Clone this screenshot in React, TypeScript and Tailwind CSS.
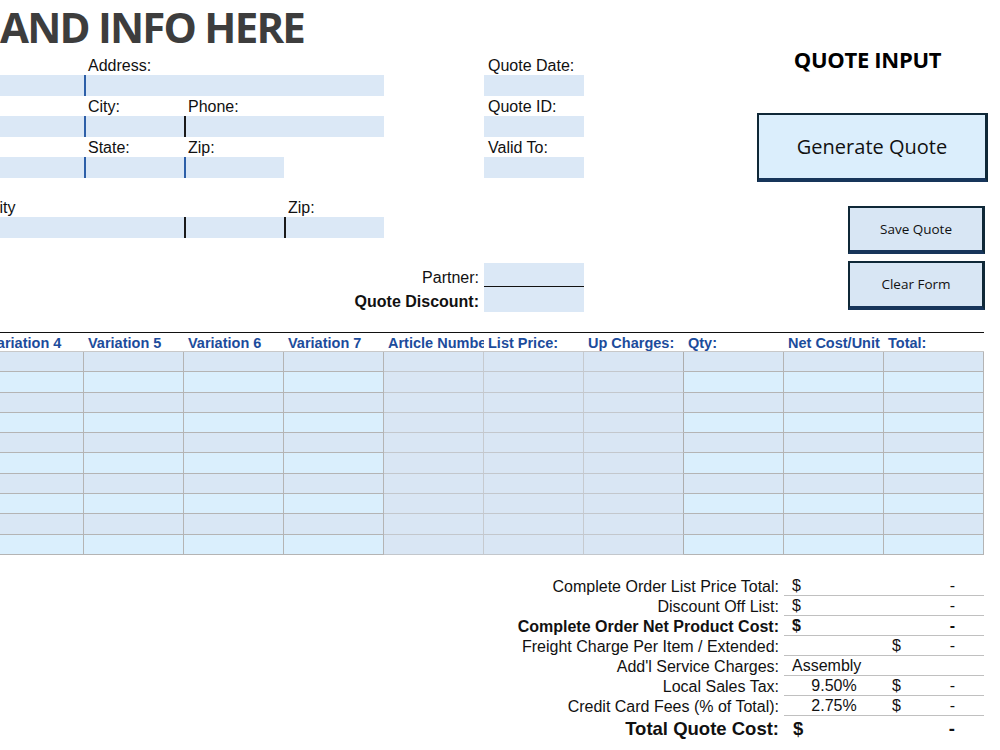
import type { ReactNode } from 'react'

const HEADERS = [
  'Variation 4',
  'Variation 5',
  'Variation 6',
  'Variation 7',
  'Article Number',
  'List Price:',
  'Up Charges:',
  'Qty:',
  'Net Cost/Unit',
  'Total:',
]

/** Cell fill + grid line colours for the line-item table. Article / List / Up Charges don't band. */
function cellClass(col: number, row: number) {
  const plain = col >= 4 && col <= 6
  if (plain) {
    const right = col === 6 ? 'border-r-[#adadad]' : 'border-r-[#c6cacf]'
    return `bg-[#d9e6f4] border-b border-r border-b-[#c3c7cc] ${right}`
  }
  const fill = row % 2 === 0 ? 'bg-[#d9e7f5]' : 'bg-[#daeffd]'
  return `${fill} border-b border-r border-b-[#b4b4b4] border-r-[#b4b4b4]`
}

function LabelRow({ h, children }: { h: string; children: ReactNode }) {
  return <div className={`flex ${h} items-end whitespace-nowrap text-[16px] leading-[18px]`}>{children}</div>
}

function Col({ children, className = '' }: { children?: ReactNode; className?: string }) {
  return <div className={`w-[100px] shrink-0 pl-1 ${className}`}>{children}</div>
}

function SumRow({ label, children, bold }: { label: string; children?: ReactNode; bold?: boolean }) {
  return (
    <div className={`flex h-[20px] items-end text-[16px] leading-[18px] ${bold ? 'font-bold' : ''}`}>
      <div className="w-[800px] shrink-0 pr-[5px] text-right whitespace-nowrap">{label}</div>
      <div className="flex h-full w-[200px] shrink-0 items-end border-b border-[#c0c0c0]">{children}</div>
    </div>
  )
}

function Money({ w = 'w-[200px]' }: { w?: string }) {
  return (
    <div className={`flex ${w} justify-between pl-2 pr-[29px]`}>
      <span>$</span>
      <span>-</span>
    </div>
  )
}

function SheetButton({ label, className }: { label: string; className: string }) {
  return (
    <button
      type="button"
      className={`flex items-center justify-center border-2 border-r-[3px] border-b-4 border-[#0f2837] border-b-[#17355a] font-['Open_Sans',sans-serif] text-[#111] ${className}`}
    >
      {label}
    </button>
  )
}

export default function App() {
  const field = 'bg-[#dbe8f6]'

  return (
    <div className="h-[750px] w-[1000px] overflow-hidden bg-white font-['Liberation_Sans',Arial,sans-serif] text-[#111]">
      <div className="-ml-4 w-[1016px]">
        {/* header block: customer info on the left, actions on the right */}
        <div className="flex h-[332px]">
          <div className="flex w-[600px] shrink-0 flex-col">
            <div className="h-[55px] pl-4 pt-[6px] font-['Open_Sans',sans-serif] text-[42px] leading-[42px] font-bold tracking-[-1.8px] whitespace-nowrap text-[#3d3d3d]">
              AND INFO HERE
            </div>

            <LabelRow h="h-[20px]">
              <Col />
              <Col>Address:</Col>
              <Col />
              <Col />
              <Col />
              <Col>Quote Date:</Col>
            </LabelRow>
            <div className="flex h-[21px]">
              <div className={`w-[100px] ${field}`} />
              <div className={`w-[300px] border-l-2 border-[#2d5fa8] ${field}`} />
              <div className="w-[100px]" />
              <div className={`w-[100px] ${field}`} />
            </div>

            <LabelRow h="h-[20px]">
              <Col />
              <Col>City:</Col>
              <Col>Phone:</Col>
              <Col />
              <Col />
              <Col>Quote ID:</Col>
            </LabelRow>
            <div className="flex h-[21px]">
              <div className={`w-[100px] ${field}`} />
              <div className={`w-[100px] border-l-2 border-[#2d5fa8] ${field}`} />
              <div className={`w-[200px] border-l-2 border-[#1a1a1a] ${field}`} />
              <div className="w-[100px]" />
              <div className={`w-[100px] ${field}`} />
            </div>

            <LabelRow h="h-[20px]">
              <Col />
              <Col>State:</Col>
              <Col>Zip:</Col>
              <Col />
              <Col />
              <Col>Valid To:</Col>
            </LabelRow>
            <div className="flex h-[21px]">
              <div className={`w-[100px] ${field}`} />
              <div className={`w-[100px] border-l-2 border-[#2d5fa8] ${field}`} />
              <div className={`w-[100px] border-l-2 border-[#2d5fa8] ${field}`} />
              <div className="w-[200px]" />
              <div className={`w-[100px] ${field}`} />
            </div>

            <div className="h-[20px]" />

            <LabelRow h="h-[19px]">
              <Col>City</Col>
              <Col />
              <Col />
              <Col>Zip:</Col>
            </LabelRow>
            <div className="flex h-[21px]">
              <div className={`w-[200px] ${field}`} />
              <div className={`w-[100px] border-l-2 border-[#1a1a1a] ${field}`} />
              <div className={`w-[100px] border-l-2 border-[#1a1a1a] ${field}`} />
            </div>

            <div className="h-[25px]" />

            <div className="flex h-[24px] items-end text-[16px] leading-[18px]">
              <div className="w-[500px] pr-[5px] text-right">Partner:</div>
              <div className={`h-full w-[100px] border-b border-[#111] ${field}`} />
            </div>
            <div className="flex h-[25px] items-end text-[16px] leading-[18px] font-bold">
              <div className="w-[500px] pr-[5px] pb-[1px] text-right">Quote Discount:</div>
              <div className={`h-full w-[100px] ${field}`} />
            </div>
          </div>

          <div className="flex w-[416px] shrink-0 flex-col">
            <div className="ml-[173px] mt-[44px] h-[30px] w-[221px] text-center font-['Open_Sans',sans-serif] text-[22px] leading-[30px] font-bold tracking-[-0.3px] text-black">
              QUOTE INPUT
            </div>
            <SheetButton label="Generate Quote" className="ml-[173px] mt-[39px] h-[69px] w-[231px] bg-[#dbeefc] text-[20px]" />
            <SheetButton label="Save Quote" className="ml-[264px] mt-[24px] h-[48px] w-[137px] bg-[#d8e6f4] text-[13.5px]" />
            <SheetButton label="Clear Form" className="ml-[264px] mt-[7px] h-[49px] w-[137px] bg-[#d8e6f4] text-[13.5px]" />
          </div>
        </div>

        {/* line items */}
        <div className="w-[1000px]">
          <div className="flex h-[20px] border-t border-[#111] border-b border-b-[#c8c8c8] bg-white">
            {HEADERS.map((h) => (
              <div
                key={h}
                className="flex w-[100px] shrink-0 items-end overflow-hidden whitespace-nowrap pl-1 text-[14.5px] leading-[16px] font-bold text-[#1c4c9c]"
              >
                {h}
              </div>
            ))}
          </div>
          {Array.from({ length: 10 }).map((_, r) => (
            <div key={r} className="flex h-[20.3px]">
              {HEADERS.map((h, c) => (
                <div key={h} className={`w-[100px] shrink-0 ${cellClass(c, r)}`} />
              ))}
            </div>
          ))}
        </div>

        {/* totals */}
        <div className="mt-[21px]">
          <SumRow label="Complete Order List Price Total:">
            <Money />
          </SumRow>
          <SumRow label="Discount Off List:">
            <Money />
          </SumRow>
          <SumRow label="Complete Order Net Product Cost:" bold>
            <Money />
          </SumRow>
          <SumRow label="Freight Charge Per Item / Extended:">
            <div className="w-[100px]" />
            <Money w="w-[100px]" />
          </SumRow>
          <SumRow label="Add'l Service Charges:">
            <div className="w-[200px] pl-2">Assembly</div>
          </SumRow>
          <SumRow label="Local Sales Tax:">
            <div className="w-[100px] text-center">9.50%</div>
            <Money w="w-[100px]" />
          </SumRow>
          <SumRow label="Credit Card Fees (% of Total):">
            <div className="w-[100px] text-center">2.75%</div>
            <Money w="w-[100px]" />
          </SumRow>
          <div className="flex h-[24px] items-end text-[18.5px] leading-[22px] font-bold">
            <div className="w-[800px] shrink-0 pr-[5px] text-right">Total Quote Cost:</div>
            <div className="flex w-[200px] justify-between pl-[9px] pr-[29px]">
              <span>$</span>
              <span>-</span>
            </div>
          </div>
        </div>
      </div>
    </div>
  )
}
